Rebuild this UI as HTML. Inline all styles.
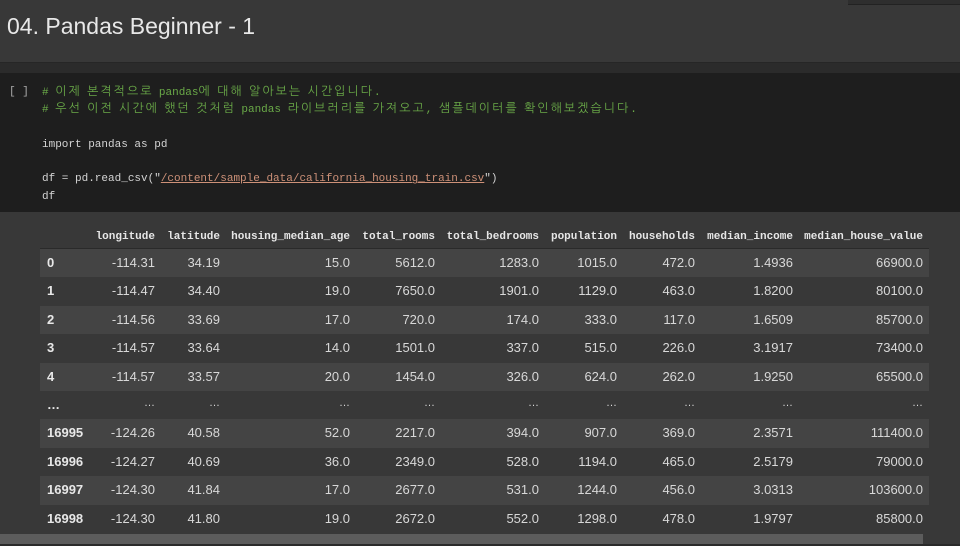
<!DOCTYPE html>
<html><head><meta charset="utf-8"><style>
*{margin:0;padding:0;box-sizing:border-box}
body{width:960px;height:546px;overflow:hidden;background:#383838;position:relative;font-family:"Liberation Sans","Noto Sans CJK KR",sans-serif}
.a{position:absolute;white-space:pre}
.code{font-family:"Liberation Mono","NanumGothic","Noto Sans CJK KR",monospace;font-size:11px;color:#d4d4d4;line-height:17.3px}
.cb{white-space:normal}
.ln{height:17.3px;line-height:17.3px;white-space:pre}
.k{font-size:12px;line-height:10px;letter-spacing:2px;font-family:"NanumGothic","Noto Sans CJK KR",sans-serif}
.g{color:#6aaa48}
.s{color:#ce9178;text-decoration:underline}
.h{font-family:"Liberation Mono","NanumGothic",monospace;font-weight:bold;font-size:11px;color:#e6e6e6}
.c{font-size:13px;color:#d8d8d8}
.i{font-size:13px;color:#e8e8e8;font-weight:bold}
.row{position:absolute;left:40px;width:889px;height:28.4px}
</style></head><body>
<div class="a" style="left:848px;top:0;width:112px;height:5px;background:#2e2e2e;border-bottom:1px solid #222"></div>
<div class="a" style="left:7px;top:13px;font-size:23px;color:#e8e8e8;font-family:'Liberation Sans',sans-serif">04. Pandas Beginner - 1</div>
<div class="a" style="left:0;top:62px;width:960px;height:11px;background:#2b2b2b;border-top:1px solid #262626"></div>
<div class="a" style="left:0;top:73px;width:960px;height:139px;background:#1e1e1e"></div>
<div class="a code" style="left:9px;top:84px;color:#aaa">[ ]</div>
<div class="a code cb" style="left:42px;top:85px;width:900px"><div class="ln g"># <span class="k">이제 본격적으로 </span>pandas<span class="k">에 대해 알아보는 시간입니다</span>.</div><div class="ln g"># <span class="k">우선 이전 시간에 했던 것처럼 </span>pandas <span class="k">라이브러리를 가져오고</span>, <span class="k">샘플데이터를 확인해보겠습니다</span>.</div><div class="ln"> </div><div class="ln">import pandas as pd</div><div class="ln"> </div><div class="ln">df = pd.read_csv("<span class="s">/content/sample_data/california_housing_train.csv</span>")</div><div class="ln">df</div></div>
<div class="a" style="left:40px;top:248px;width:889px;height:1px;background:#2a2a2a"></div>
<div id="t"></div>
<div class="a" style="left:0;top:534px;width:923px;height:10px;background:#5c5c5c"></div>
<div class="a" style="left:0;top:544px;width:960px;height:2px;background:#2a2a2a"></div>
<script>
var R=[155,220,350,435,539,617,695,793,923];
var H=["longitude","latitude","housing_median_age","total_rooms","total_bedrooms","population","households","median_income","median_house_value"];
var D=[["0","-114.31","34.19","15.0","5612.0","1283.0","1015.0","472.0","1.4936","66900.0"],
["1","-114.47","34.40","19.0","7650.0","1901.0","1129.0","463.0","1.8200","80100.0"],
["2","-114.56","33.69","17.0","720.0","174.0","333.0","117.0","1.6509","85700.0"],
["3","-114.57","33.64","14.0","1501.0","337.0","515.0","226.0","3.1917","73400.0"],
["4","-114.57","33.57","20.0","1454.0","326.0","624.0","262.0","1.9250","65500.0"],
["...","...","...","...","...","...","...","...","...","..."],
["16995","-124.26","40.58","52.0","2217.0","394.0","907.0","369.0","2.3571","111400.0"],
["16996","-124.27","40.69","36.0","2349.0","528.0","1194.0","465.0","2.5179","79000.0"],
["16997","-124.30","41.84","17.0","2677.0","531.0","1244.0","456.0","3.0313","103600.0"],
["16998","-124.30","41.80","19.0","2672.0","552.0","1298.0","478.0","1.9797","85800.0"]];
var h="";
for(var j=0;j<9;j++)h+='<div class="a h" style="right:'+(960-R[j])+'px;top:231px">'+H[j]+'</div>';
for(var i=0;i<10;i++){var yy=249+28.4*i;
if(i%2==0)h+='<div class="row" style="top:'+yy+'px;background:#444"></div>';
var dot=D[i][0]=="...";
var ty=yy+6;
h+='<div class="a i" style="left:47px;top:'+ty+'px">'+(dot?'…':D[i][0])+'</div>';
for(var j=0;j<9;j++)h+='<div class="a c" style="right:'+(960-R[j])+'px;top:'+ty+'px;'+(dot?'font-size:11px':'')+'">'+(dot?'…':D[i][j+1])+'</div>';}
document.getElementById('t').innerHTML=h;
</script>
</body></html>
